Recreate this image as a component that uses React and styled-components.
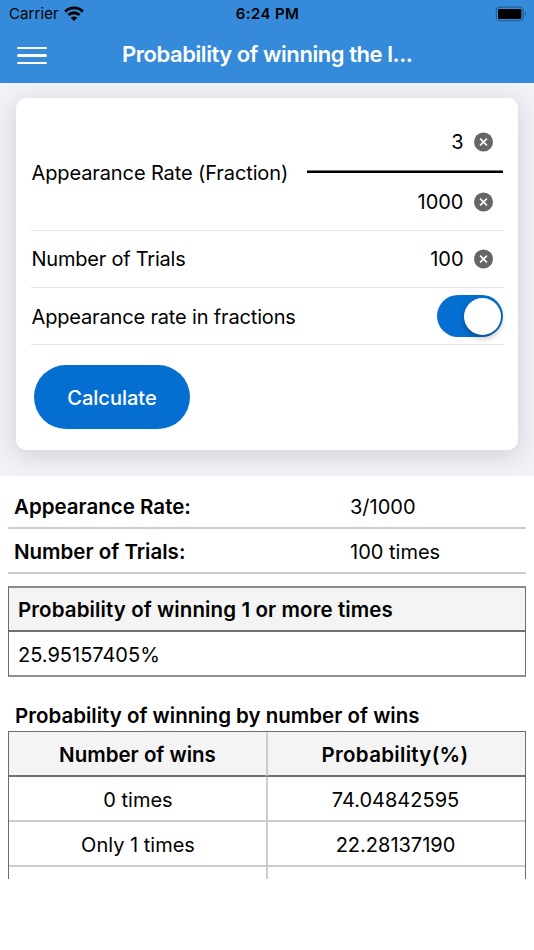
import React, { useState } from 'react';
import styled, { createGlobalStyle } from 'styled-components';

const GlobalStyle = createGlobalStyle`
  * {
    box-sizing: border-box;
  }
  body {
    margin: 0;
    background: #fff;
    color: #000;
    font-family: Inter, "Liberation Sans", sans-serif;
    font-size: 20px;
    line-height: 24px;
    overflow: hidden;
  }
`

const Screen = styled.div`
  width: 534px;
  height: 950px;
  background: #fff;
  overflow: hidden;
`

const Header = styled.header`
  height: 83px;
  background: #358bd9;
`

const StatusBar = styled.div`
  height: 28px;
  display: grid;
  grid-template-columns: 1fr auto 1fr;
  align-items: center;
  padding: 0 7px 0 9px;
  font-size: 15px;
  line-height: 28px;
`

const Carrier = styled.div`
  display: flex;
  align-items: center;
  gap: 5px;
  letter-spacing: .1px;
`

const Clock = styled.div`
  font-weight: 600;
  letter-spacing: .4px;
  margin-right: 1px;
`

const Battery = styled.svg`
  justify-self: end;
`

const NavBar = styled.div`
  height: 55px;
  display: flex;
  align-items: center;
  padding-left: 17px;
`

const MenuButton = styled.button`
  width: 30px;
  height: 18px;
  padding: 0;
  border: 0;
  background: none;
  display: flex;
  flex-direction: column;
  justify-content: space-between;
`

const MenuLine = styled.span`
  width: 30px;
  height: 2.4px;
  border-radius: 2px;
  background: #fff;
`

const NavTitle = styled.h1`
  margin: 0 0 4px 75px;
  color: #fff;
  font-size: 22px;
  font-weight: 600;
  letter-spacing: -.44px;
  white-space: nowrap;
`

const FormSection = styled.section`
  height: 393px;
  padding: 15px 16px 0 15.5px;
  background: #f1f2f7;
  overflow: hidden;
`

const Card = styled.div`
  height: 352.4px;
  padding: 0 15.5px;
  border-radius: 10px;
  background: #fff;
  box-shadow: 0 5px 24px rgba(0, 0, 0, 0.15);
`

const FormRow = styled.div`
  height: ${props => props.height || 57}px;
  display: flex;
  align-items: center;
  justify-content: space-between;
  border-bottom: 1px solid #e4e4e5;
`

const Text = styled.span`
  letter-spacing: ${props => props.spacing || 0}px;
  white-space: nowrap;
`

const FormLabel = styled(Text)`
  padding: ${props => props.drop || 0}px 0 0 .5px;
`

const Fraction = styled.div`
  width: 196px;
  padding-top: 15px;
  height: 132px;
`

const FractionLine = styled.div`
  height: 3px;
  background: #000;
  border-top: 1px solid #777;
`

const Field = styled.div`
  height: ${props => props.height || 56}px;
  display: flex;
  align-items: center;
  justify-content: flex-end;
  gap: 10px;
  padding-right: 10px;
`

const Toggle = styled.button`
  width: 66px;
  height: 42px;
  padding: 0 2px;
  border: 0;
  border-radius: 21px;
  display: flex;
  align-items: center;
  justify-content: ${props => props.on ? 'flex-end' : 'flex-start'};
  background: ${props => props.on ? '#056fd1' : '#ccc'};
`

const Knob = styled.span`
  width: 37px;
  height: 37px;
  border-radius: 50%;
  background: #fff;
  box-shadow: 0 3px 6px rgba(0, 0, 0, 0.3);
`

const CalcButton = styled.button`
  width: 156px;
  height: 64px;
  margin: 20.4px 0 0 3px;
  padding: 1px 0 0;
  border: 0;
  border-radius: 32px;
  background: #056fd1;
  color: #fff;
  font: inherit;
  font-weight: 500;
`

const Results = styled.section`
  height: 403px;
  padding: 8px 8px 0;
  overflow: hidden;
`

const SummaryRow = styled.div`
  height: 45px;
  display: grid;
  grid-template-columns: 336px 1fr;
  align-items: center;
  padding: 2px 0 0 6px;
  border-bottom: 2px solid #ccc;
`

const Label = styled(Text)`
  font-size: 20.5px;
  font-weight: 600;
`

const Box = styled.div`
  width: 518px;
  height: 91px;
  margin-top: 12px;
  border: 1px solid #6c6c6c;
  border-top: 2px solid #8c8c8c;
  border-bottom: 2px solid #8f8f8f;
`

const BoxHead = styled.div`
  height: 44px;
  display: flex;
  align-items: center;
  padding: 2px 0 0 9px;
  background: #f4f4f4;
  border-bottom: 2px solid #707070;
`

const BoxBody = styled.div`
  height: 43px;
  display: flex;
  align-items: center;
  padding: 2px 0 0 9px;
`

const TableTitle = styled.div`
  height: 54px;
  padding: 27px 0 0 7px;
`

const Table = styled.table`
  width: 518px;
  table-layout: fixed;
  border-spacing: 0;
  border: 1px solid #6c6c6c;
  text-align: center;
`

const FirstCol = styled.col`
  width: 257px;
`

const HeadCell = styled.th`
  height: 45px;
  padding: 2px 0 0;
  background: #f4f4f4;
  font-size: 20.5px;
  font-weight: 600;
  letter-spacing: ${props => props.spacing || 0}px;
  border-bottom: 2px solid #707070;

  & + & {
    border-left: 2px solid #ccc;
    padding-right: 3px;
  }
`

const Cell = styled.td`
  height: 45px;
  padding: 2px 0 0 1px;
  border-bottom: 2px solid #ccc;

  & + & {
    border-left: 2px solid #ccc;
    padding: 2px 2px 0 0;
  }
`

function WifiIcon() {
  return (
    <svg width="20" height="16" viewBox="0 0 20 16" fill="none" stroke="#000" strokeWidth="2.9">
      <path d="M1.2 5.6C6.2.6 13.8.6 18.8 5.6" />
      <path d="M4.4 9C7.6 5.9 12.4 5.9 15.6 9" />
      <path d="M10 14.9 6.7 11.7C8.7 10 11.3 10 13.3 11.7Z" fill="#000" stroke="none" />
    </svg>
  )
}

function BatteryIcon() {
  return (
    <Battery width="32" height="16" viewBox="0 0 32 16">
      <rect x="1.3" y="1.2" width="27" height="13.4" rx="3.6" fill="none" stroke="#24609a" strokeWidth="1.3" />
      <rect x="3" y="3.1" width="23.4" height="9.8" rx="1.4" fill="#000" />
      <path d="M29.9 5.5C31.7 6.4 31.7 9.2 29.9 10.1Z" fill="#24609a" />
    </Battery>
  )
}

function ClearIcon() {
  return (
    <svg width="19" height="20" viewBox="0 0 19 20">
      <circle cx="9.5" cy="10" r="9.5" fill="#666" />
      <path d="M6.1 6.6 12.9 13.4M12.9 6.6 6.1 13.4" stroke="#fff" strokeWidth="1.6" />
    </svg>
  )
}

function NumberField(props) {
  return (
    <Field height={props.height}>
      <Text>{props.value}</Text>
      <ClearIcon />
    </Field>
  )
}

const wins = [
  { times: '0 times', rate: '74.04842595' },
  { times: 'Only 1 times', rate: '22.28137190' },
  { times: '', rate: '' },
]

export default function App() {
  const [fractions, setFractions] = useState(true)

  return (
    <Screen>
      <GlobalStyle />
      <Header>
        <StatusBar>
          <Carrier>Carrier <WifiIcon /></Carrier>
          <Clock>6:24 PM</Clock>
          <BatteryIcon />
        </StatusBar>
        <NavBar>
          <MenuButton aria-label="Menu">
            <MenuLine />
            <MenuLine />
            <MenuLine />
          </MenuButton>
          <NavTitle>Probability of winning the l...</NavTitle>
        </NavBar>
      </Header>
      <FormSection>
        <Card>
          <FormRow height={133}>
            <FormLabel drop={17} spacing={-0.11}>Appearance Rate (Fraction)</FormLabel>
            <Fraction>
              <NumberField value="3" height={57} />
              <FractionLine />
              <NumberField value="1000" height={57} />
            </Fraction>
          </FormRow>
          <FormRow>
            <FormLabel spacing={-0.22}>Number of Trials</FormLabel>
            <NumberField value="100" />
          </FormRow>
          <FormRow>
            <FormLabel drop={1} spacing={-0.16}>Appearance rate in fractions</FormLabel>
            <Toggle on={fractions} onClick={() => setFractions(!fractions)}>
              <Knob />
            </Toggle>
          </FormRow>
          <CalcButton>Calculate</CalcButton>
        </Card>
      </FormSection>
      <Results>
        <SummaryRow>
          <Label>Appearance Rate:</Label>
          <Text>3/1000</Text>
        </SummaryRow>
        <SummaryRow>
          <Label>Number of Trials:</Label>
          <Text>100 times</Text>
        </SummaryRow>
        <Box>
          <BoxHead><Label spacing={0.1}>Probability of winning 1 or more times</Label></BoxHead>
          <BoxBody><Text>25.95157405%</Text></BoxBody>
        </Box>
        <TableTitle><Label>Probability of winning by number of wins</Label></TableTitle>
        <Table>
          <colgroup>
            <FirstCol />
            <col />
          </colgroup>
          <thead>
            <tr>
              <HeadCell>Number of wins</HeadCell>
              <HeadCell spacing={0.3}>Probability(%)</HeadCell>
            </tr>
          </thead>
          <tbody>
            {wins.map((row, i) => (
              <tr key={i}>
                <Cell>{row.times}</Cell>
                <Cell>{row.rate}</Cell>
              </tr>
            ))}
          </tbody>
        </Table>
      </Results>
    </Screen>
  )
}
